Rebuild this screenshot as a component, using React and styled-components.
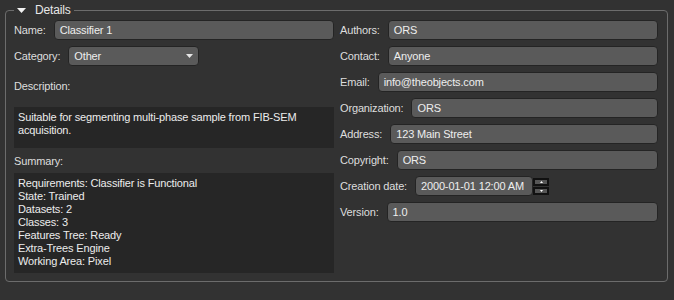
import React from 'react';
import styled, { createGlobalStyle } from 'styled-components';

const GlobalStyle = createGlobalStyle`
  html, body {
    margin: 0;
    padding: 0;
    background: #323232;
  }
  body {
    width: 674px;
    height: 300px;
    overflow: hidden;
    font-family: "Liberation Sans", Arial, sans-serif;
    font-size: 11px;
    letter-spacing: -0.15px;
    color: #dedede;
  }
`;

const Panel = styled.fieldset`
  margin: 3px 6px 0 5px;
  padding: 3px 8px 8px 8px;
  border: 1px solid #6c6c6c;
  border-radius: 4px;
  min-width: 0;
`;

const Legend = styled.legend`
  padding: 0 3px;
  display: flex;
  align-items: center;
  gap: 9px;
  line-height: 14px;
  color: #e8e8e8;
  font-size: 12px;
`;

const Columns = styled.div`
  display: grid;
  grid-template-columns: 320px 318px;
  column-gap: 6px;
  align-items: start;
`;

const Column = styled.div`
  display: flex;
  flex-direction: column;
  gap: 6px;
`;

const Row = styled.div`
  display: flex;
  align-items: center;
  gap: 8px;
  height: 20px;
`;

const Label = styled.span`
  white-space: nowrap;
  color: #dedede;
  margin-top: ${(p) => p.$top || 0}px;
  line-height: 20px;
`;

const Field = styled.div`
  flex: ${(p) => (p.$width ? 'none' : '1')};
  width: ${(p) => (p.$width ? `${p.$width}px` : 'auto')};
  height: 20px;
  box-sizing: border-box;
  display: flex;
  align-items: center;
  justify-content: space-between;
  padding: 0 5px;
  background: #5a5a5a;
  border: 1px solid #242424;
  border-radius: 4px;
  color: #eeeeee;
  white-space: nowrap;
`;

const TextBox = styled.div`
  box-sizing: border-box;
  height: ${(p) => p.$height}px;
  margin-top: ${(p) => p.$top || 0}px;
  padding: 4px 4px;
  background: #262626;
  color: #ececec;
  line-height: 13px;
`;

const DateEdit = styled.div`
  display: flex;
  align-items: center;
`;

const Spin = styled.div`
  display: flex;
  flex-direction: column;
  gap: 1px;
  width: 16px;
`;

const SpinButton = styled.div`
  box-sizing: border-box;
  height: 8px;
  display: flex;
  align-items: center;
  justify-content: center;
  background: #565656;
  border: 2px solid #111111;
`;

const Triangle = ({ down, w = 5, h = 3, color = '#ffffff' }) => (
  <svg width={w} height={h} viewBox={`0 0 ${w} ${h}`}>
    <polygon
      points={down ? `0,0 ${w},0 ${w / 2},${h}` : `0,${h} ${w},${h} ${w / 2},0`}
      fill={color}
    />
  </svg>
);

const summary = [
  'Requirements: Classifier is Functional',
  'State: Trained',
  'Datasets: 2',
  'Classes: 3',
  'Features Tree: Ready',
  'Extra-Trees Engine',
  'Working Area: Pixel',
];

const meta = [
  ['Authors:', 'ORS'],
  ['Contact:', 'Anyone'],
  ['Email:', 'info@theobjects.com'],
  ['Organization:', 'ORS'],
  ['Address:', '123 Main Street'],
  ['Copyright:', 'ORS'],
];

export default function App() {
  return (
    <>
      <GlobalStyle />
      <Panel>
        <Legend>
          <Triangle down w={9} h={5} color="#f2f2f2" />
          <span>Details</span>
        </Legend>
        <Columns>
          <Column>
            <Row>
              <Label>Name:</Label>
              <Field>Classifier 1</Field>
            </Row>
            <Row>
              <Label>Category:</Label>
              <Field $width={131}>
                <span>Other</span>
                <Triangle down w={7} h={4} color="#e6e6e6" />
              </Field>
            </Row>
            <Label $top={4}>Description:</Label>
            <TextBox $height={41} $top={5}>
              Suitable for segmenting multi-phase sample from FIB-SEM acquisition.
            </TextBox>
            <Label $top={-3}>Summary:</Label>
            <TextBox $height={100} $top={-4}>
              {summary.map((line) => (
                <div key={line}>{line}</div>
              ))}
            </TextBox>
          </Column>
          <Column>
            {meta.map(([label, value]) => (
              <Row key={label}>
                <Label>{label}</Label>
                <Field>{value}</Field>
              </Row>
            ))}
            <Row>
              <Label>Creation date:</Label>
              <DateEdit>
                <Field $width={118}>2000-01-01 12:00 AM</Field>
                <Spin>
                  <SpinButton>
                    <Triangle w={3} h={2} />
                  </SpinButton>
                  <SpinButton>
                    <Triangle down w={3} h={2} />
                  </SpinButton>
                </Spin>
              </DateEdit>
            </Row>
            <Row>
              <Label>Version:</Label>
              <Field>1.0</Field>
            </Row>
          </Column>
        </Columns>
      </Panel>
    </>
  );
}
